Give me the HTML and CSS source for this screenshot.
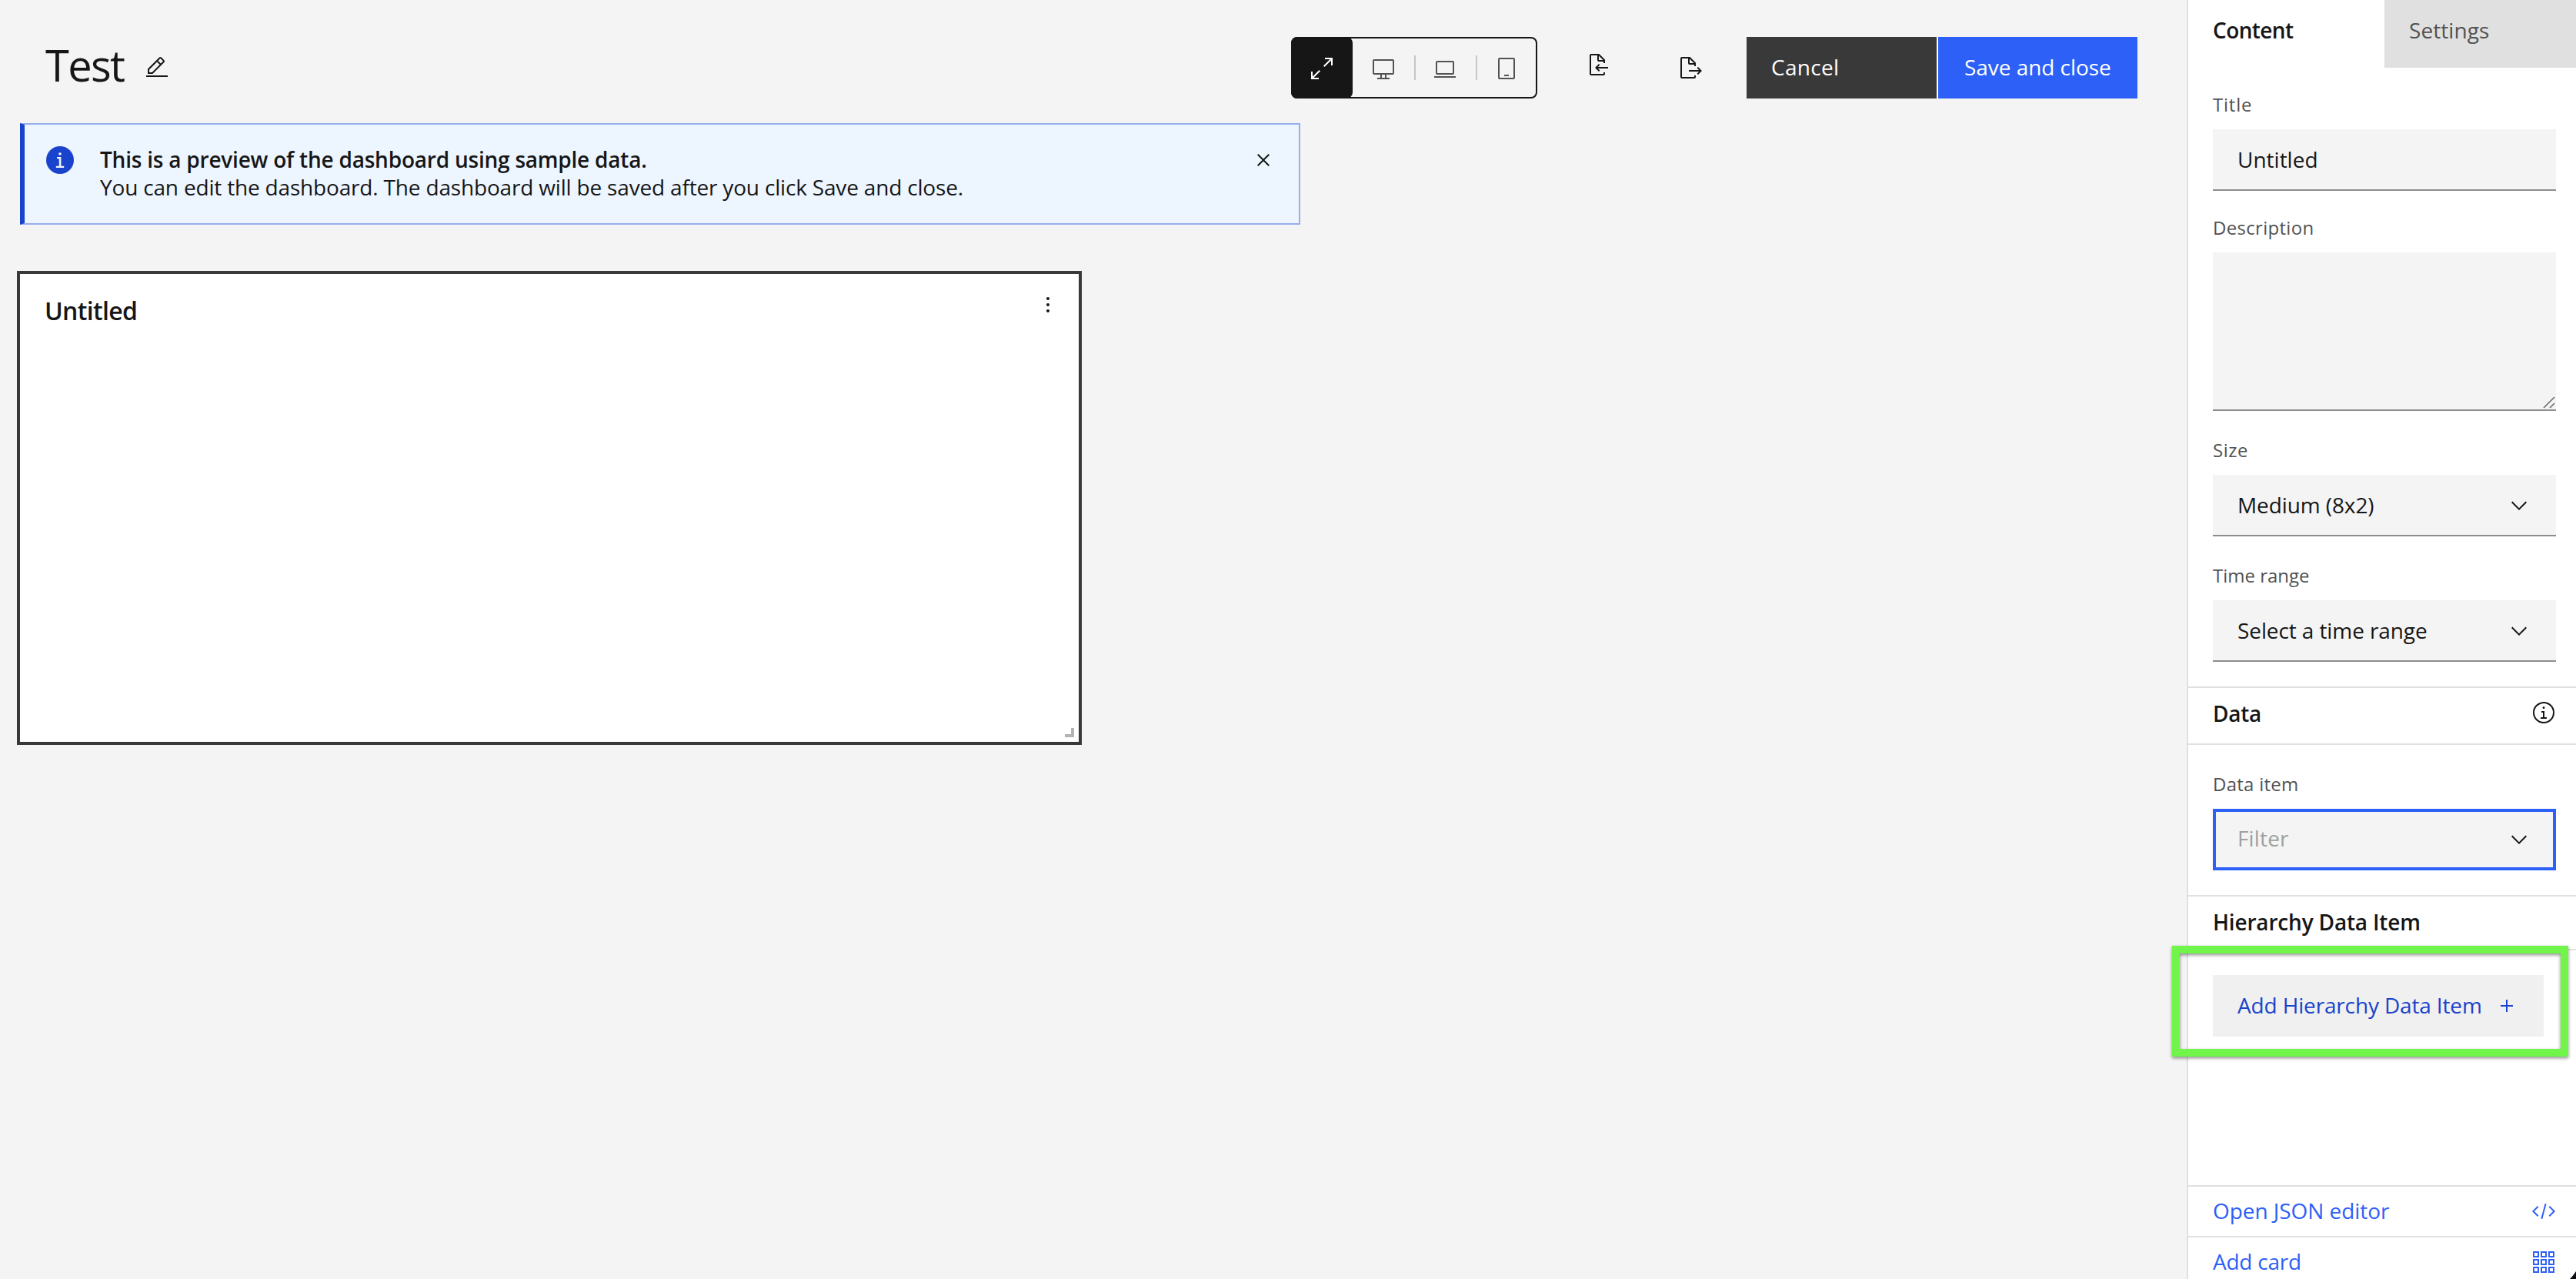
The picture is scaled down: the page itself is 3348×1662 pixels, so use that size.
FILE: index.html
```html
<!DOCTYPE html>
<html lang="en">
<head>
<meta charset="utf-8">
<title>Dashboard editor</title>
<link rel="stylesheet" href="styles.css">
</head>
<body>
<div class="app">
  <main class="editor">
    <header class="header">
      <div class="heading">
        <h1 class="page-title">Test</h1>
        <svg class="icon edit-icon" viewBox="0 0 32 32"><path d="M2 26H30V28H2zM25.4 9c.8-.8.8-2 0-2.8l-3.6-3.6c-.8-.8-2-.8-2.8 0l-15 15V24h6.4L25.4 9zM20.4 4L24 7.6l-3 3L17.4 7 20.4 4zM6 22v-3.6l10-10 3.6 3.6-10 10H6z"/></svg>
      </div>
      <div class="breakpoints">
        <div class="breakpoint selected"><svg class="icon" viewBox="0 0 32 32"><path d="M20 2V4H26.586L18 12.582 19.414 14 28 5.414V12H30V2zM14 19.416L12.592 18 4 26.586V20H2V30H12V28H5.414z"/></svg></div>
        <div class="breakpoint"><svg class="icon" viewBox="0 0 32 32"><path d="M28,4H4A2,2,0,0,0,2,6V22a2,2,0,0,0,2,2h8v4H8v2H24V28H20V24h8a2,2,0,0,0,2-2V6A2,2,0,0,0,28,4ZM18,28H14V24h4Zm10-6H4V6H28Z"/></svg></div>
        <div class="breakpoint divided"><svg class="icon" viewBox="0 0 32 32"><path d="M26,24H6a2,2,0,0,1-2-2V8A2,2,0,0,1,6,6H26a2,2,0,0,1,2,2V22A2,2,0,0,1,26,24ZM6,8V22H26V8ZM2 26H30V28H2z"/></svg></div>
        <div class="breakpoint divided"><svg class="icon" viewBox="0 0 32 32"><path d="M19,24v2H13V24ZM25,30H7a2,2,0,0,1-2-2V4A2,2,0,0,1,7,2H25a2,2,0,0,1,2,2V28A2,2,0,0,1,25,30ZM7,4V28H25V4Z"/></svg></div>
      </div>
      <svg class="icon import-icon" viewBox="0 0 32 32"><path d="M28 19L14.83 19 17.41 16.41 16 15 11 20 16 25 17.41 23.59 14.83 21 28 21zM24,14V10a1,1,0,0,0-.29-.71l-7-7A1,1,0,0,0,16,2H6A2,2,0,0,0,4,4V28a2,2,0,0,0,2,2H22a2,2,0,0,0,2-2V26H22v2H6V4h8v6a2,2,0,0,0,2,2h6v2Zm-8-4V4.41L21.59,10Z"/></svg>
      <svg class="icon export-icon" viewBox="0 0 32 32"><path d="M13 21L26.17 21 23.59 23.59 25 25 30 20 25 15 23.59 16.41 26.17 19 13 19zM22,14V10a1,1,0,0,0-.29-.71l-7-7A1,1,0,0,0,14,2H4A2,2,0,0,0,2,4V28a2,2,0,0,0,2,2H20a2,2,0,0,0,2-2V26H20v2H4V4h8v6a2,2,0,0,0,2,2h6v2Zm-8-4V4.41L19.59,10Z"/></svg>
      <div class="button cancel">Cancel</div>
      <div class="button save">Save and close</div>
    </header>

    <section class="notification">
      <svg class="notification-icon" viewBox="0 0 20 20"><circle cx="10" cy="10" r="9" fill="#1943cc"/><path d="M8 8h2.7v5.9h1.9V15H7.4v-1.1h2V9.1H8z" fill="#edf5ff"/><circle cx="10" cy="6" r=".9" fill="#edf5ff"/></svg>
      <div class="notification-text">
        <strong class="notification-title">This is a preview of the dashboard using sample data.</strong>
        <p class="notification-body">You can edit the dashboard. The dashboard will be saved after you click Save and close.</p>
      </div>
      <svg class="icon close-icon" viewBox="0 0 32 32"><path d="M24 9.4L22.6 8 16 14.6 9.4 8 8 9.4 14.6 16 8 22.6 9.4 24 16 17.4 22.6 24 24 22.6 17.4 16z"/></svg>
    </section>

    <section class="card">
      <h2 class="card-title">Untitled</h2>
      <svg class="icon card-menu" viewBox="0 0 32 32"><circle cx="16" cy="8" r="2"/><circle cx="16" cy="16" r="2"/><circle cx="16" cy="24" r="2"/></svg>
      <span class="card-resize"></span>
    </section>
  </main>

  <aside class="panel">
    <nav class="tabs">
      <div class="tab active">Content</div>
      <div class="tab">Settings</div>
    </nav>

    <div class="group">
      <div class="label ls-title">Title</div>
      <div class="field">Untitled</div>
      <div class="label label-close ls-description">Description</div>
      <div class="field textarea">
        <svg class="textarea-grip" viewBox="0 0 16 16"><path d="M1 15L15 1M9 15L15 9"/></svg>
      </div>
      <div class="label ls-size">Size</div>
      <div class="field"><span class="ls-select">Medium (8x2)</span><svg class="icon chevron" viewBox="0 0 32 32"><path d="M16 22L6 12 7.4 10.6 16 19.2 24.6 10.6 26 12z"/></svg></div>
      <div class="label ls-range">Time range</div>
      <div class="field"><span class="ls-select">Select a time range</span><svg class="icon chevron" viewBox="0 0 32 32"><path d="M16 22L6 12 7.4 10.6 16 19.2 24.6 10.6 26 12z"/></svg></div>
    </div>

    <div class="section-head data-head">
      <span class="ls-data">Data</span>
      <svg class="icon" viewBox="0 0 32 32"><path d="M17 22V14H13V16H15V22H12V24H20V22zM16,8a1.5,1.5,0,1,0,1.5,1.5A1.5,1.5,0,0,0,16,8Z"/><circle cx="16" cy="16" r="13" fill="none" stroke="currentColor" stroke-width="2"/></svg>
    </div>

    <div class="group">
      <div class="label ls-data-item">Data item</div>
      <div class="field focused"><span class="placeholder">Filter</span><svg class="icon chevron" viewBox="0 0 32 32"><path d="M16 22L6 12 7.4 10.6 16 19.2 24.6 10.6 26 12z"/></svg></div>
    </div>

    <div class="section-head">
      <span class="ls-hierarchy">Hierarchy Data Item</span>
    </div>

    <div class="add-area">
      <div class="add-button"><span>Add Hierarchy Data Item</span><svg class="icon" viewBox="0 0 32 32"><path d="M17 15V8H15V15H8V17H15V24H17V17H24V15z"/></svg></div>
      <div class="highlight"></div>
    </div>

    <footer class="links">
      <div class="link"><span class="ls-json">Open JSON editor</span><svg class="icon" viewBox="0 0 32 32"><path d="M31 16L24 23 22.59 21.59 28.17 16 22.59 10.41 24 9zM1 16L8 9 9.41 10.41 3.83 16 9.41 21.59 8 23z"/><path transform="rotate(-75 15.996 16)" d="M5.91 15H26.08V17H5.91z"/></svg></div>
      <div class="link"><span class="ls-card">Add card</span><svg class="icon" viewBox="0 0 32 32"><g fill="none" stroke="currentColor" stroke-width="2"><path d="M3 3h6v6h-6zM13 3h6v6h-6zM23 3h6v6h-6zM3 13h6v6h-6zM13 13h6v6h-6zM23 13h6v6h-6zM3 23h6v6h-6zM13 23h6v6h-6zM23 23h6v6h-6z"/></g></svg></div>
    </footer>
  </aside>
  <svg class="corner" viewBox="0 0 8 10"><path d="M8 0V10H0Q4 6 8 0z"/></svg>
</div>
</body>
</html>
```
FILE: styles.css
```css
* { box-sizing: border-box; margin: 0; padding: 0; }

body {
  font-family: "Open Sans", "Noto Sans", sans-serif;
  font-size: 28px;
  line-height: 36px;
  color: #161616;
  background: #f4f4f4;
  overflow: hidden;
}

.app {
  position: relative;
  display: flex;
  width: 3348px;
  height: 1662px;
  overflow: hidden;
}

.icon { width: 32px; height: 32px; flex: none; fill: currentColor; display: block; }

/* Editor */
.editor { flex: 1; }

.header {
  display: flex;
  align-items: flex-start;
  height: 160px;
  padding: 48px 64px 0 59px;
}
.heading { display: flex; flex: 1; align-items: flex-start; }
.page-title {
  width: 129px;
  font-size: 56px;
  line-height: 72px;
  font-weight: 400;
  letter-spacing: -1.66px;
}
.edit-icon { margin-top: 24px; }

.breakpoints {
  display: flex;
  width: 320px;
  height: 80px;
  border: 2px solid #161616;
  border-radius: 8px;
}
.breakpoint {
  display: flex;
  flex: none;
  width: 80px;
  align-items: center;
  justify-content: center;
  padding-top: 2px;
  color: #525252;
}
.breakpoint.selected {
  margin: -2px 0 -2px -2px;
  background: #161616;
  color: #fff;
  border-radius: 8px;
}
.breakpoint.divided::before {
  content: "";
  width: 2px;
  height: 32px;
  margin: -2px 22px 0 -24px;
  background: #c6c6c6;
}
.import-icon { margin: 20px 0 0 64px; }
.export-icon { margin: 24px 56px 0 88px; }

.button { height: 80px; padding: 21px 32px; color: #fff; white-space: nowrap; }
.cancel { width: 247px; margin-right: 2px; background: #393939; letter-spacing: .3px; }
.save { width: 259px; padding-left: 34px; background: #2d60f6; letter-spacing: -.05px; box-shadow: -2px 0 #fff; }

.notification {
  display: flex;
  width: 1664px;
  height: 132px;
  margin-left: 26px;
  padding-left: 26px;
  background: #edf5ff;
  border: 2px solid #97adee;
  border-left: 6px solid #1943cc;
}
.notification-icon { width: 40px; height: 40px; margin: 26px 32px 0 0; }
.notification-text { flex: 1; padding-top: 27px; }
.notification-title { display: block; font-weight: 600; letter-spacing: -.22px; }
.notification-body { letter-spacing: -.18px; }
.close-icon { margin: 30px 30px 0 0; }

.card {
  position: relative;
  display: flex;
  justify-content: space-between;
  width: 1384px;
  height: 616px;
  margin: 60px 0 0 22px;
  padding: 28px 24px 0 32px;
  background: #fff;
  border: 4px solid #393939;
}
.card-title { font-size: 32px; line-height: 40px; font-weight: 600; letter-spacing: -.67px; }
.card-menu { margin-top: -4px; }
.card-resize {
  position: absolute;
  right: 6px;
  bottom: 6px;
  width: 12px;
  height: 12px;
  border-right: 4px solid #b3b3b3;
  border-bottom: 4px solid #b3b3b3;
}

/* Side panel */
.panel {
  display: flex;
  flex-direction: column;
  flex: none;
  width: 506px;
  height: 1662px;
  background: #fff;
  border-left: 2px solid #e0e0e0;
}
.tabs { display: flex; flex: none; height: 88px; margin-bottom: -3px; }
.tab { flex: 1; padding: 21px 32px; background: #e0e0e0; color: #525252; letter-spacing: .07px; }
.tab.active {
  flex: none;
  width: 255px;
  background: #fff;
  color: #161616;
  font-weight: 600;
  letter-spacing: -.6px;
}

.group { padding: 0 26px 32px 32px; }
.label { padding: 35px 0 16px; font-size: 24px; line-height: 32px; color: #525252; }
.label-close { padding-top: 32px; }

.field {
  display: flex;
  justify-content: space-between;
  height: 80px;
  padding: 21px 32px 0;
  background: #f4f4f4;
  border-bottom: 2px solid #8d8d8d;
}
.field .chevron { margin-top: 3px; }
.textarea { position: relative; height: 206px; }
.textarea-grip {
  position: absolute;
  right: 1px;
  bottom: 1px;
  width: 16px;
  height: 16px;
  fill: none;
  stroke: #666;
  stroke-width: 1.5;
}
.focused { padding: 16px 28px 0; border: 4px solid #2d60f6; }
.focused .chevron { margin-top: 4px; }
.placeholder { color: #a0a0a0; letter-spacing: .14px; }

.section-head {
  display: flex;
  flex: none;
  justify-content: space-between;
  height: 72px;
  padding: 15px 26px 0 32px;
  border-top: 2px solid #e0e0e0;
  border-bottom: 2px solid #e0e0e0;
  font-weight: 600;
}
.data-head { height: 76px; }
.section-head .icon { margin-top: 1px; }

.add-area { position: relative; padding: 32px 42px 0 32px; }
.add-button {
  display: flex;
  justify-content: space-between;
  height: 80px;
  padding: 21px 32px 0;
  background: #f0f0f0;
  color: #1a43cb;
  letter-spacing: -.15px;
}
.add-button span { white-space: nowrap; }
.add-button .icon { margin-top: 3px; }
.highlight {
  position: absolute;
  left: -21px;
  top: -6px;
  width: 515px;
  height: 144px;
  border: 10px solid #72f54a;
  filter: drop-shadow(0 2px 2px rgba(0, 0, 0, .45));
}

.links { margin-top: auto; height: 122px; color: #2d60f6; overflow: hidden; }
.link {
  display: flex;
  justify-content: space-between;
  height: 66px;
  padding: 13px 26px 0 32px;
  border-top: 2px solid #e0e0e0;
}
.link .icon { margin-top: 3px; }

.ls-title { letter-spacing: .78px; }
.ls-description { letter-spacing: .3px; }
.ls-size { letter-spacing: .51px; }
.ls-select { letter-spacing: -.1px; }
.ls-data { letter-spacing: -.28px; }
.ls-data-item { letter-spacing: .25px; }
.ls-hierarchy { letter-spacing: -.18px; }
.ls-json { letter-spacing: -.06px; }
.ls-card { letter-spacing: -.24px; }

.corner { position: absolute; right: 0; bottom: 0; width: 8px; height: 10px; fill: #0b0f14; }
```
